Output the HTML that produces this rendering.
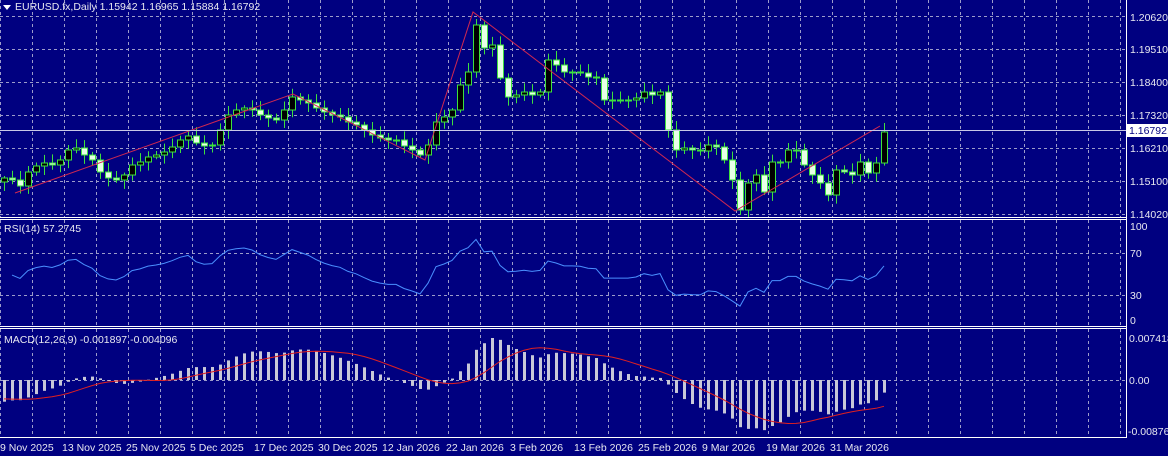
<!DOCTYPE html>
<html><head><meta charset="utf-8"><style>
html,body{margin:0;padding:0;background:#000080;width:1168px;height:456px;overflow:hidden}
svg{display:block}
text{font-family:"Liberation Sans",sans-serif;font-size:10.5px;fill:#e8e8f0}
</style></head><body>
<svg id="s" width="1168" height="456" xmlns="http://www.w3.org/2000/svg">
<rect width="1168" height="456" fill="#000080"/>
<g id="grid" stroke="#b8b8d8" stroke-width="1" stroke-dasharray="3,3" opacity="0.85"></g>
<g id="draw"></g>
<g stroke="#ffffff" stroke-width="1" fill="none">
<line x1="0" y1="217.5" x2="1126" y2="217.5"/><line x1="0" y1="219.5" x2="1126" y2="219.5"/>
<line x1="0" y1="326.5" x2="1126" y2="326.5"/><line x1="0" y1="328.5" x2="1126" y2="328.5"/>
<line x1="0" y1="437.5" x2="1126" y2="437.5"/>
<line x1="1126.5" y1="0" x2="1126.5" y2="438"/>
</g>
<line x1="0" y1="130.5" x2="1126" y2="130.5" stroke="#c8c8e8" stroke-width="1"/>
<rect x="1127" y="124" width="41" height="13" fill="#ffffff"/>
<text x="1129" y="134" style="fill:#000080">1.16792</text>
<text x="1130" y="21">1.20620</text>
<text x="1130" y="53">1.19510</text>
<text x="1130" y="86">1.18400</text>
<text x="1130" y="119">1.17320</text>
<text x="1130" y="152">1.16210</text>
<text x="1130" y="185">1.15100</text>
<text x="1130" y="218">1.14020</text>
<text x="1130" y="230">100</text>
<text x="1130" y="257">70</text>
<text x="1130" y="299">30</text>
<text x="1130" y="324">0</text>
<text x="1129" y="342">0.007418</text>
<text x="1129" y="384">0.00</text>
<text x="1128" y="435">-0.008769</text>
<polygon points="3,5 11,5 7,10" fill="#fff"/>
<text x="15" y="10">EURUSD.fx,Daily  1.15942 1.16965 1.15884 1.16792</text>
<text x="4" y="232">RSI(14) 57.2745</text>
<text x="4" y="343">MACD(12,26,9) -0.001897 -0.004096</text>
<g id="dates"></g>
</svg>
<script>
(function(){
var NS="http://www.w3.org/2000/svg",d=document.getElementById('draw'),g=document.getElementById('grid');
function el(p,t,a){var e=document.createElementNS(NS,t);for(var k in a)e.setAttribute(k,a[k]);p.appendChild(e);return e}
for(var x=0;x<1126;x+=32){el(g,'line',{x1:x+.5,y1:0,x2:x+.5,y2:217});el(g,'line',{x1:x+.5,y1:220,x2:x+.5,y2:326});el(g,'line',{x1:x+.5,y1:329,x2:x+.5,y2:437});}
[16,49,82,115,148,181,214,253,295,380].forEach(function(y){el(g,'line',{x1:0,y1:y+.5,x2:1126,y2:y+.5})});
var Y=[178,180,186,172,166,163,165,160,150,148,155,160,172,178,180,175,165,162,157,155,152,147,140,136,143,146,145,130,115,110,108,110,115,118,120,110,97,100,103,108,112,115,117,122,125,130,135,138,140,140,146,150,155,145,
122,117,110,85,72,25,48,45,78,97,95,92,95,92,60,65,72,72,73,77,78,100,100,100,100,98,92,95,92,130,150,148,150,151,145,147,160,180,210,183,175,192,162,162,150,150,165,175,183,195,170,172,175,162,173,163,132];
var n=Y.length;
var zz=[[15,193],[293,94],[425,160],[473,12],[735,211],[880,126]];
function P(y){return 1.2062-(y-16)/2973}
var closes=[],prev=182;
for(var i=0;i<n;i++){
 var x=4+8*i,yc=Y[i],yo=prev;
 closes.push(P(yc));
 var tp=Math.min(yo,yc),bt=Math.max(yo,yc);
 var hi=tp-2-7*Math.abs(Math.sin(i*2.3)),lo=bt+2+7*Math.abs(Math.cos(i*1.9));
 el(d,'line',{x1:x+.5,y1:hi,x2:x+.5,y2:lo,stroke:'#3ee03e'});
 var h=Math.max(bt-tp,1);
 el(d,'rect',{x:x-2.5,y:tp,width:6,height:h,fill:(yc<yo?'#000000':'#e8ffe8'),stroke:'#3ee03e','stroke-width':1});
 prev=yc;
}
el(d,'polyline',{points:zz.map(function(p){return p.join(',')}).join(' '),fill:'none',stroke:'#d02850','stroke-width':1});
var pts=[],ag=0.0012,al=0.0012;
for(var i=1;i<n;i++){var ch=closes[i]-closes[i-1];var gn=Math.max(ch,0),ls=Math.max(-ch,0);
 ag=(ag*13+gn)/14;al=(al*13+ls)/14;
 var v=al==0?100:100-100/(1+ag/al);pts.push((4+8*i)+','+(295-(v-30)*1.05).toFixed(1));}
el(d,'polyline',{points:pts.join(' '),fill:'none',stroke:'#4a90ff','stroke-width':1});
var k12=2/13,k26=2/27,e12=closes[0],e26=closes[0]+0.0035,m=[],sg=[];
for(var i=0;i<n;i++){if(i){e12=closes[i]*k12+e12*(1-k12);e26=closes[i]*k26+e26*(1-k26);}m.push(e12-e26);}
var s0=-0.003;
for(var i=0;i<n;i++){var s=0,c=0;for(var j=i-8;j<=i;j++){s+=(j<0?s0:m[j]);c++}sg.push(s/c)}
var mx=0;m.forEach(function(v){if(v>mx)mx=v});var sc=42/mx;
var sp=[];
for(var i=0;i<n;i++){var x=4+8*i,y=380-m[i]*sc;
 el(d,'rect',{x:x-1,y:Math.min(y,380),width:3,height:Math.max(Math.abs(y-380),0.5),fill:'#c8c8d8'});
 sp.push(x+','+(380-sg[i]*sc).toFixed(1));}
el(d,'polyline',{points:sp.join(' '),fill:'none',stroke:'#e02020','stroke-width':1});
var dl=document.getElementById('dates');
[["9 Nov 2025",0],["13 Nov 2025",62],["25 Nov 2025",126],["5 Dec 2025",190],["17 Dec 2025",254],["30 Dec 2025",318],["12 Jan 2026",382],["22 Jan 2026",446],["3 Feb 2026",510],["13 Feb 2026",574],["25 Feb 2026",638],["9 Mar 2026",702],["19 Mar 2026",766],["31 Mar 2026",830]].forEach(function(t){
 var e=el(dl,'text',{x:t[1],y:451});e.textContent=t[0];});
})();
</script>
</body></html>
